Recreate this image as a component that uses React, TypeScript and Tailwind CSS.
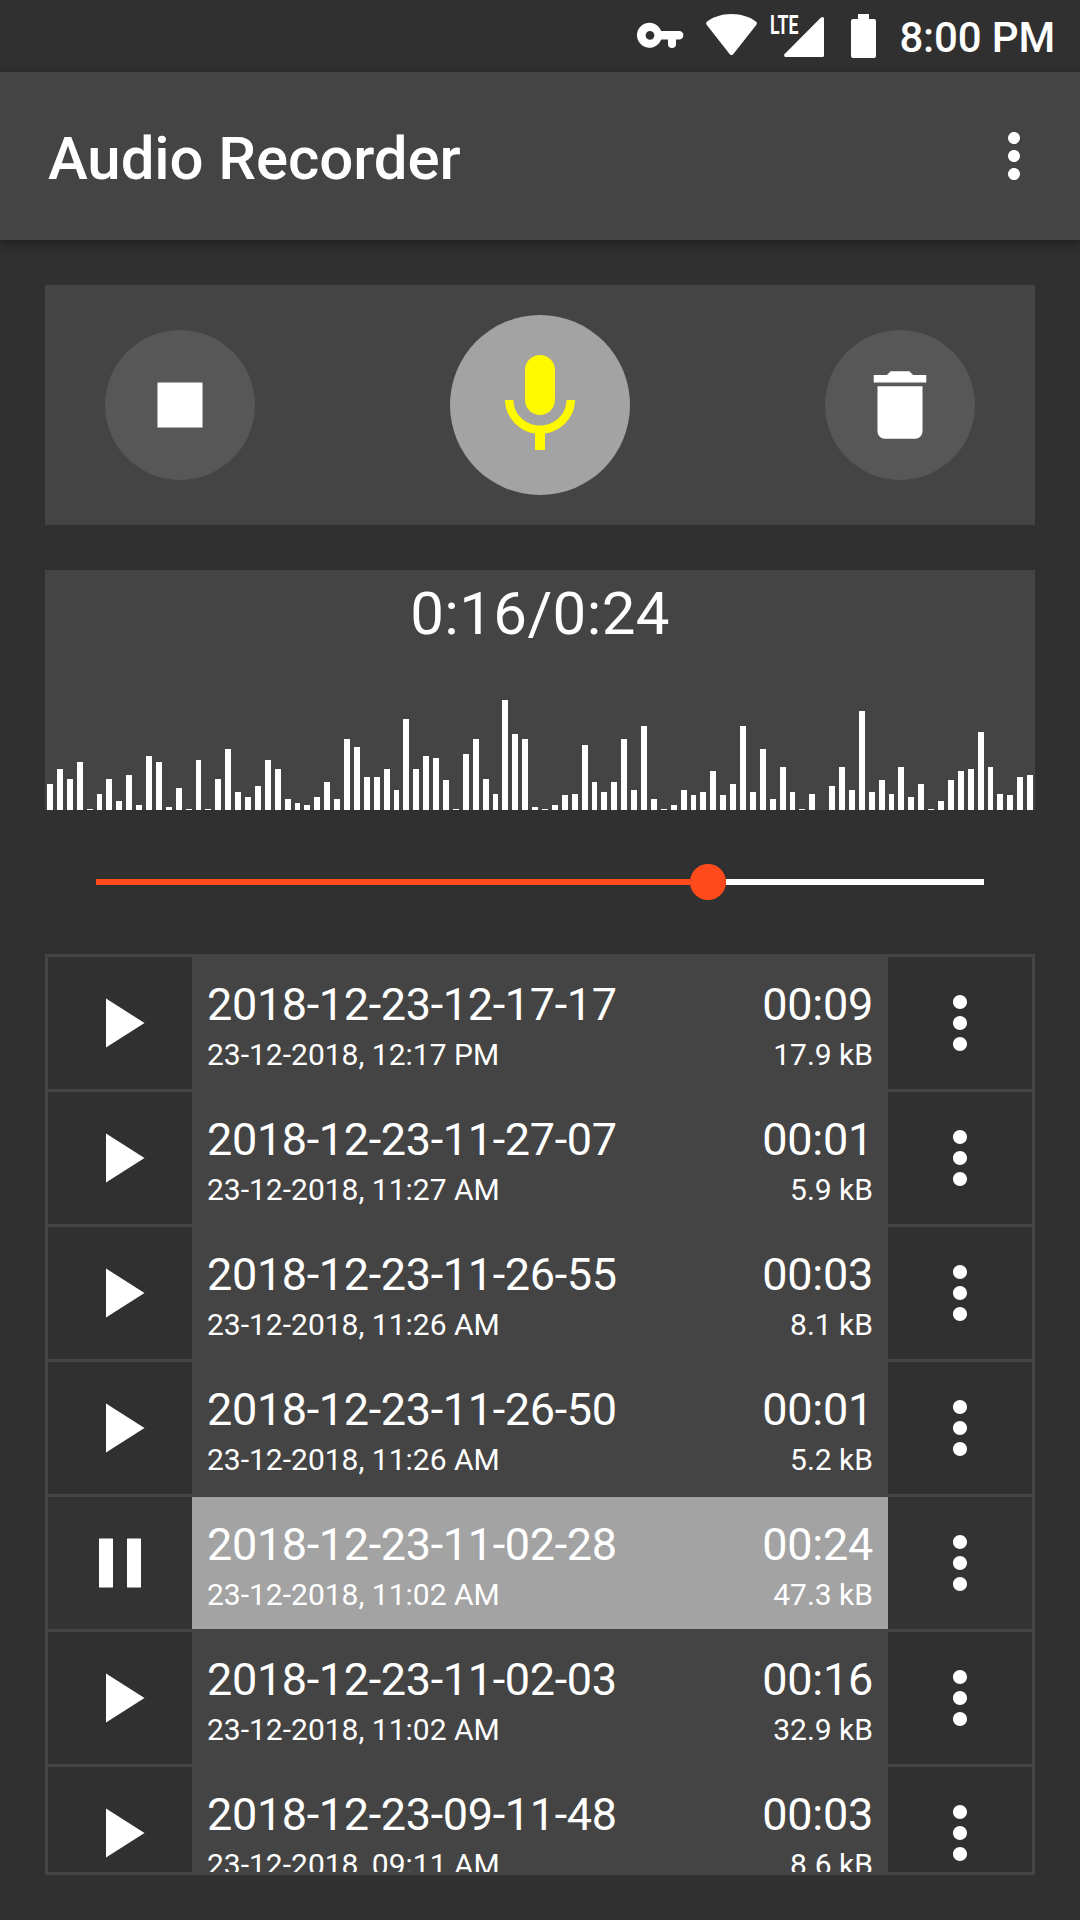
import React from "react";

type Recording = { name: string; date: string; length: string; size: string; playing?: boolean };

const recordings: Recording[] = [
  { name: "2018-12-23-12-17-17", date: "23-12-2018, 12:17 PM", length: "00:09", size: "17.9 kB" },
  { name: "2018-12-23-11-27-07", date: "23-12-2018, 11:27 AM", length: "00:01", size: "5.9 kB" },
  { name: "2018-12-23-11-26-55", date: "23-12-2018, 11:26 AM", length: "00:03", size: "8.1 kB" },
  { name: "2018-12-23-11-26-50", date: "23-12-2018, 11:26 AM", length: "00:01", size: "5.2 kB" },
  { name: "2018-12-23-11-02-28", date: "23-12-2018, 11:02 AM", length: "00:24", size: "47.3 kB", playing: true },
  { name: "2018-12-23-11-02-03", date: "23-12-2018, 11:02 AM", length: "00:16", size: "32.9 kB" },
  { name: "2018-12-23-09-11-48", date: "23-12-2018, 09:11 AM", length: "00:03", size: "8.6 kB" },
];

const levels = [
  26, 41, 31, 48, 1, 16, 31, 9, 35, 5, 54, 48, 3, 22, 1, 50, 1, 31, 61, 18, 13, 24, 50, 41, 11, 7, 5, 13, 28, 11, 71,
  63, 33, 33, 41, 20, 91, 41, 54, 52, 30, 1, 56, 71, 31, 16, 110, 76, 71, 3, 1, 5, 15, 16, 65, 28, 18, 28, 71, 20, 84,
  11, 1, 5, 20, 15, 18, 39, 15, 26, 84, 18, 61, 11, 43, 18, 1, 16, 0, 24, 43, 20, 99, 18, 30, 16, 43, 13, 26, 1, 9, 30,
  39, 41, 78, 43, 16, 15, 33, 35,
];

function Icon({ d, className }: { d: string; className: string }) {
  return (
    <svg viewBox="0 0 24 24" className={className} fill="currentColor">
      <path d={d} />
    </svg>
  );
}

const PLAY = "M8 5v14l11-7z";
const PAUSE = "M6 19h4V5H6v14zm8-14v14h4V5h-4z";
const STOP = "M6 6h12v12H6z";
const MORE =
  "M12 8c1.1 0 2-.9 2-2s-.9-2-2-2-2 .9-2 2 .9 2 2 2zm0 2c-1.1 0-2 .9-2 2s.9 2 2 2 2-.9 2-2-.9-2-2-2zm0 6c-1.1 0-2 .9-2 2s.9 2 2 2 2-.9 2-2-.9-2-2-2z";
const MIC =
  "M12 14c1.66 0 2.99-1.34 2.99-3L15 5c0-1.66-1.34-3-3-3S9 3.34 9 5v6c0 1.66 1.34 3 3 3zm5.3-3c0 3-2.54 5.1-5.3 5.1S6.7 14 6.7 11H5c0 3.41 2.72 6.23 6 6.72V21h2v-3.28c3.28-.48 6-3.3 6-6.72h-1.7z";
const TRASH = "M6 19c0 1.1.9 2 2 2h8c1.1 0 2-.9 2-2V7H6v12zM19 4h-3.5l-1-1h-5l-1 1H5v2h14V4z";

function StatusBar() {
  return (
    <div className="flex h-[72px] shrink-0 items-start justify-end pr-[25px]">
      <svg className="mt-[22px] h-[28px] w-[48px]" viewBox="0 0 48 28" fill="#fff">
        <path
          fillRule="evenodd"
          d="M25.2 9H43.2a4.2 4.2 0 0 1 4.2 4.2a4.2 4.2 0 0 1-4.2 4.2H40V22a4 4 0 0 1-8 0V17.4H25.2A12.5 12.5 0 1 1 25.2 9ZM14 8.9a4.4 4.4 0 1 0 0 8.8a4.4 4.4 0 1 0 0-8.8Z"
        />
      </svg>
      <svg className="ml-[21px] mt-[13px] h-[44px] w-[53px]" viewBox="0 0 53 44" fill="#fff">
        <path d="M26.5 1C16.4 1 8 4.2 1.9 8.7Q.3 9.9 1.6 11.7L24.8 41.2Q26.5 43 28.2 41.2L51.4 11.7Q52.7 9.9 51.1 8.7C45 4.2 36.6 1 26.5 1Z" />
      </svg>
      <svg className="ml-[12px] mt-[7px] h-[52px] w-[54px] overflow-visible" viewBox="0 -6 54 52" fill="#fff">
        <text x="0" y="20.8" fontFamily="Roboto" fontWeight="700" fontSize="26" textLength="28.5" lengthAdjust="spacingAndGlyphs">
          LTE
        </text>
        <path d="M16 44Q13.6 44 14.4 41.2L51 4.6Q54 3 54 5.6V42.5Q54 44 52.5 44Z" />
      </svg>
      <svg className="ml-[27px] mt-[14px] h-[44px] w-[25px]" viewBox="0 0 25 44" fill="#fff">
        <path d="M7 0H18V5H23Q25 5 25 7V42Q25 44 23 44H2Q0 44 0 42V7Q0 5 2 5H7Z" />
      </svg>
      <span className="ml-[23px] mt-[13px] text-[42px] font-medium leading-[50px] tracking-[-0.15px]">8:00 PM</span>
    </div>
  );
}

function Row({ item, last }: { item: Recording; last: boolean }) {
  return (
    <div className={last ? "flex h-[132px] shrink-0" : "mb-[3px] flex h-[132px] shrink-0"}>
      <button className={`flex w-36 items-center justify-center ${item.playing ? "bg-[#333333]" : "bg-[#303030]"}`}>
        <Icon d={item.playing ? PAUSE : PLAY} className="size-[84px]" />
      </button>
      <div className={`flex flex-1 justify-between px-[15px] pt-[21px] ${item.playing ? "bg-[#a3a3a3]" : ""}`}>
        <div className="flex flex-col">
          <span className="text-[45px] leading-[54px] tracking-[-0.35px]">{item.name}</span>
          <span className="mt-[5px] text-[30px] leading-[36px]">{item.date}</span>
        </div>
        <div className="flex flex-col items-end">
          <span className="text-[45px] leading-[54px] tracking-[-0.25px]">{item.length}</span>
          <span className="mt-[5px] text-[30px] leading-[36px]">{item.size}</span>
        </div>
      </div>
      <button className={`flex w-36 items-center justify-center ${item.playing ? "bg-[#333333]" : "bg-[#303030]"}`}>
        <Icon d={MORE} className="size-[84px]" />
      </button>
    </div>
  );
}

export default function App() {
  return (
    <div className="flex h-[1920px] w-[1080px] flex-col overflow-hidden bg-[#303030] font-[Roboto,sans-serif] text-white">
      <StatusBar />
      <header className="flex h-[168px] shrink-0 items-center justify-between bg-[#444444] pl-12 pr-[30px] shadow-[0_4px_10px_rgba(0,0,0,0.35)]">
        <h1 className="pt-[6px] text-[60px] font-medium leading-[72px] tracking-[-0.1px]">Audio Recorder</h1>
        <Icon d={MORE} className="size-[72px]" />
      </header>

      <main className="flex flex-1 flex-col px-[45px] pt-[45px]">
        <section className="flex h-[240px] shrink-0 items-center justify-between bg-[#444444] px-[60px]">
          <button className="flex size-[150px] items-center justify-center rounded-full bg-[#575757]">
            <Icon d={STOP} className="size-[90px]" />
          </button>
          <button className="flex size-[180px] items-center justify-center rounded-full bg-[#a3a3a3] text-[#fff900]">
            <Icon d={MIC} className="size-[120px]" />
          </button>
          <button className="flex size-[150px] items-center justify-center rounded-full bg-[#575757]">
            <Icon d={TRASH} className="size-[90px]" />
          </button>
        </section>

        <section className="mt-[45px] flex h-[240px] shrink-0 flex-col items-center justify-between bg-[#444444]">
          <div className="pt-[9px] text-[60px] leading-[70px] tracking-[0.4px]">0:16/0:24</div>
          <svg className="h-[120px] w-full" viewBox="0 0 990 120" fill="#fff" shapeRendering="crispEdges">
            {levels.map((h, i) => {
              const x = Math.round((20 + 99 * i) / 10);
              const end = Math.round((79.4 + 99 * i) / 10);
              return <rect key={i} x={x} y={120 - h} width={end - x} height={h} />;
            })}
          </svg>
        </section>

        <div className="mx-[51px] mt-[54px] flex h-9 shrink-0 items-center">
          <div className="h-[6px] w-[594px] bg-[#ff4b1b]" />
          <div className="size-9 shrink-0 rounded-full bg-[#ff4b1b]" />
          <div className="h-[6px] flex-1 bg-white" />
        </div>

        <section className="mt-[54px] flex h-[921px] shrink-0 flex-col overflow-hidden border-[3px] border-[#444444] bg-[#444444]">
          {recordings.map((item, i) => (
            <Row key={item.name} item={item} last={i === recordings.length - 1} />
          ))}
        </section>
      </main>
    </div>
  );
}
